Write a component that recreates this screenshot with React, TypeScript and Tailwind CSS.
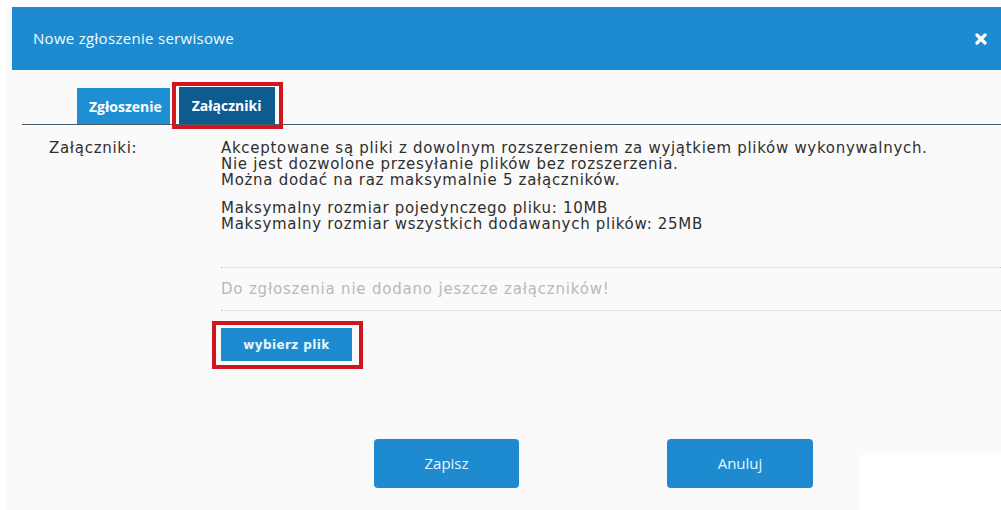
import { ReactNode } from "react";

const rules = [
  "Akceptowane są pliki z dowolnym rozszerzeniem za wyjątkiem plików wykonywalnych.",
  "Nie jest dozwolone przesyłanie plików bez rozszerzenia.",
  "Można dodać na raz maksymalnie 5 załączników.",
];

const limits = [
  "Maksymalny rozmiar pojedynczego pliku: 10MB",
  "Maksymalny rozmiar wszystkich dodawanych plików: 25MB",
];

function Highlight({ children, frame }: { children: ReactNode; frame: string }) {
  // red frame drawn around the highlighted control
  return (
    <span className="relative inline-flex">
      {children}
      <span className={"pointer-events-none absolute border-4 border-[#d0161e] " + frame} />
    </span>
  );
}

function CloseIcon() {
  return (
    <svg width="12" height="12" viewBox="0 0 12 12" className="block">
      <path d="M2 2 L10 10 M10 2 L2 10" stroke="#ffffff" strokeWidth="3.2" strokeLinecap="round" />
    </svg>
  );
}

export default function App() {
  return (
    <div className="w-[1001px] h-[510px] bg-white pl-[6px] pt-[7px] overflow-hidden font-['Open_Sans',sans-serif]">
      <div className="h-full bg-[#fafafa] flex flex-col">
        {/* header */}
        <div className="ml-[6px] h-[63px] shrink-0 bg-[#1e8bd0] flex items-center justify-between pl-[21px] pr-[10px]">
          <span className="text-[#f4fbff] text-[15px] tracking-[0.3px]">Nowe zgłoszenie serwisowe</span>
          <button className="p-1">
            <CloseIcon />
          </button>
        </div>

        {/* tabs */}
        <div className="ml-[16px] mt-[11px] h-[44px] flex items-end pl-[55px] border-b border-[#4b5b68]">
          <div className="h-[36px] pl-[12px] pr-[8px] bg-[#1f8fd3] text-white font-bold text-[14px] flex items-center">
            Zgłoszenie
          </div>
          <div className="ml-[9px]">
            <Highlight frame="-left-[7px] -right-[8px] -top-[5px] -bottom-[5px]">
              <div className="h-[37px] w-[96px] pl-[13px] bg-[#0e5b8f] text-white font-bold text-[14px] flex items-center">
                Załączniki
              </div>
            </Highlight>
          </div>
        </div>

        {/* attachments form */}
        <div className="flex pt-[15px] font-['DejaVu_Sans',Verdana,sans-serif] text-[15px] tracking-[0.7px] leading-[16px] text-[#2f2f2f]">
          <div className="w-[215px] pl-[43px] shrink-0">Załączniki:</div>
          <div className="flex-1">
            <div>
              {rules.map((r) => (
                <div key={r}>{r}</div>
              ))}
            </div>
            <div className="mt-[12px]">
              {limits.map((l) => (
                <div key={l}>{l}</div>
              ))}
            </div>
            <div className="mt-[35px] border-t border-dotted border-[#c8c8c8] border-b py-[13px] text-[#b9b9b9] tracking-[0.8px]">
              Do zgłoszenia nie dodano jeszcze załączników!
            </div>
            <div className="mt-[17px]">
              <Highlight frame="-left-[9px] -right-[11px] -top-[7px] -bottom-[8px]">
                <button className="w-[131px] h-[33px] bg-[#1e8bd0] text-[#e6f6ff] font-bold text-[12px] tracking-[0.4px]">
                  wybierz plik
                </button>
              </Highlight>
            </div>
          </div>
        </div>

        {/* footer */}
        <div className="mt-auto flex items-start pl-[368px]">
          <button className="mb-[22px] w-[145px] h-[49px] rounded-[4px] bg-[#1e8bd0] text-[#e8f6ff] text-[15px]">
            Zapisz
          </button>
          <button className="ml-[148px] w-[146px] h-[49px] rounded-[4px] bg-[#1e8bd0] text-[#e8f6ff] text-[15px]">
            Anuluj
          </button>
          <div className="ml-auto self-end w-[141px] h-[55px] bg-white" />
        </div>
      </div>
    </div>
  );
}
